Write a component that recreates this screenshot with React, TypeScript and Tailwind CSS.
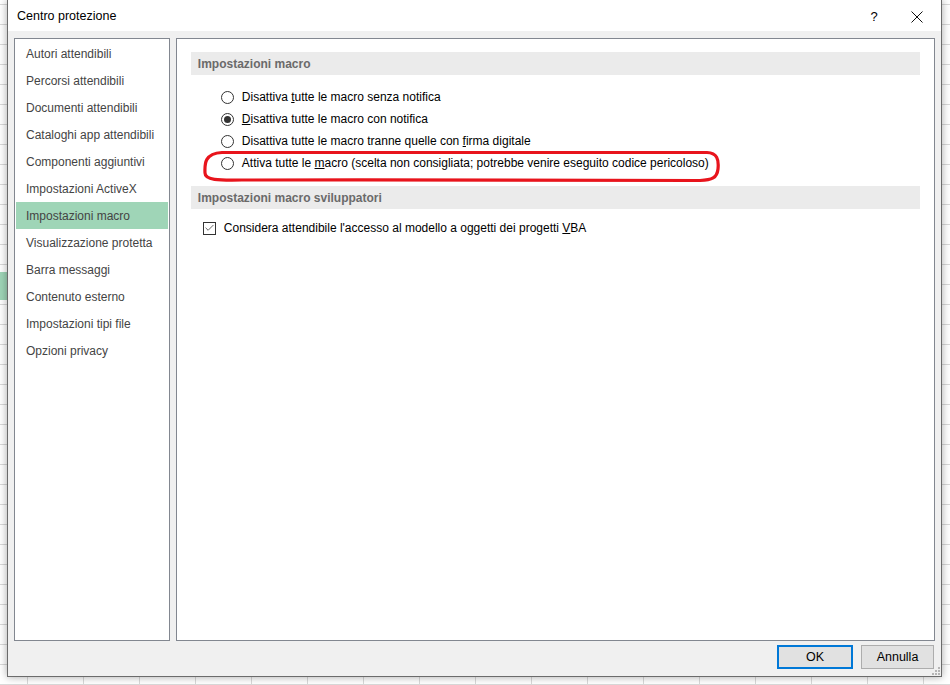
import { Check } from 'lucide-react';

const menu = [
  'Autori attendibili',
  'Percorsi attendibili',
  'Documenti attendibili',
  'Cataloghi app attendibili',
  'Componenti aggiuntivi',
  'Impostazioni ActiveX',
  'Impostazioni macro',
  'Visualizzazione protetta',
  'Barra messaggi',
  'Contenuto esterno',
  'Impostazioni tipi file',
  'Opzioni privacy',
];

function Radio({ checked }: { checked?: boolean }) {
  return (
    <span className="w-[13px] h-[13px] rounded-full border border-[#333] bg-white flex items-center justify-center shrink-0">
      {checked && <span className="w-[7px] h-[7px] rounded-full bg-[#333]" />}
    </span>
  );
}

function SectionHeader({ children }: { children: string }) {
  return (
    <div className="h-[23px] bg-[#ebebeb] flex items-center pl-[7px] text-[#6a6a6a] font-semibold">
      {children}
    </div>
  );
}

export default function App() {
  return (
    <div
      className="relative w-[950px] h-[685px] overflow-hidden bg-white bg-[linear-gradient(#d9d9d9_1px,transparent_1px),linear-gradient(90deg,#d9d9d9_1px,transparent_1px)] bg-size-[56px_20px] bg-position-[27px_4px] text-[12px] text-black"
      style={{ fontFamily: '"Segoe UI", "Liberation Sans", Arial, sans-serif' }}
    >
      <div className="absolute left-0 top-[272px] w-[7px] h-[28px] bg-[#9fd5b7]" />

      {/* dialog */}
      <div className="relative ml-[7px] w-[935px] h-[677px] bg-[#f0f0f0] border border-t-0 border-[#6b6b6b] shadow-[0_0_8px_rgba(0,0,0,0.35)] flex flex-col">
        <div className="h-[31px] bg-white flex items-center pl-[9px] pr-[14px] pt-[2px] text-[12.5px]">
          <span className="flex-1">Centro protezione</span>
          <span className="w-[20px] text-center text-[13px] mr-[27px]">?</span>
          <svg width="12" height="12" viewBox="0 0 12 12" className="mr-[4px]">
            <path d="M0.5 0.5 L11.5 11.5 M11.5 0.5 L0.5 11.5" stroke="#111" strokeWidth="1" />
          </svg>
        </div>

        <div className="flex gap-[6px] px-[6px] pt-[7px]">
          <div className="w-[156px] h-[603px] bg-white border border-[#828790] pt-[1px] px-[1px] text-[#444]">
            {menu.map((m) => (
              <div
                key={m}
                className={`h-[27px] flex items-center pl-[10px] ${m === 'Impostazioni macro' ? 'bg-[#9fd5b7]' : ''}`}
              >
                {m}
              </div>
            ))}
          </div>

          <div className="relative w-[760px] h-[603px] bg-white border border-[#828790] pt-[13px] px-[14px]">
            <SectionHeader>Impostazioni macro</SectionHeader>
            <div className="mt-[11px] pl-[30px] flex flex-col">
              <div className="h-[22px] flex items-center gap-[8px]">
                <Radio />
                <span>Disattiva <u>t</u>utte le macro senza notifica</span>
              </div>
              <div className="h-[22px] flex items-center gap-[8px]">
                <Radio checked />
                <span><u>D</u>isattiva tutte le macro con notifica</span>
              </div>
              <div className="h-[22px] flex items-center gap-[8px]">
                <Radio />
                <span>Disattiva tutte le macro tranne quelle con <u>f</u>irma digitale</span>
              </div>
              <div className="h-[22px] flex items-center gap-[8px]">
                <Radio />
                <span>Attiva tutte le <u>m</u>acro (scelta non consigliata; potrebbe venire eseguito codice pericoloso)</span>
              </div>
            </div>

            <div className="mt-[12px]">
              <SectionHeader>Impostazioni macro sviluppatori</SectionHeader>
            </div>
            <div className="mt-[8px] pl-[12px] h-[22px] flex items-center gap-[8px]">
              <span className="w-[13px] h-[13px] border border-[#333] bg-white flex items-center justify-center">
                <Check size={12} strokeWidth={1.5} color="#222" />
              </span>
              <span>Considera attendibile l'accesso al modello a oggetti dei progetti <u>V</u>BA</span>
            </div>

            {/* red highlight drawn over the 4th option */}
            <svg
              className="absolute left-[25px] top-[110px] pointer-events-none"
              width="520"
              height="36"
              viewBox="0 0 520 36"
            >
              <path
                d="M20 3.5 C120 2 300 3 505 3.5 C515 4 517 10 516 20 C515 29 510 31 498 31.5 C380 32 200 30.5 40 31 C16 31.5 3 31 3 24 C2.5 14 3 4.5 20 3.5 Z"
                fill="none"
                stroke="#e8141c"
                strokeWidth="3.2"
              />
            </svg>
          </div>
        </div>

        <div className="flex justify-end gap-[8px] pr-[7px] mt-[4px]">
          <button className="w-[76px] h-[24px] bg-[#e1e1e1] border-2 border-[#0078d7] text-[12.5px]">OK</button>
          <button className="w-[73px] h-[24px] bg-[#e1e1e1] border border-[#adadad] text-[12.5px]">Annulla</button>
        </div>

        <svg className="absolute right-[1px] bottom-[1px]" width="8" height="8" viewBox="0 0 8 8">
          <rect x="6" y="0" width="2" height="2" fill="#b5b5b5" />
          <rect x="3" y="3" width="2" height="2" fill="#b5b5b5" />
          <rect x="6" y="3" width="2" height="2" fill="#b5b5b5" />
          <rect x="0" y="6" width="2" height="2" fill="#b5b5b5" />
          <rect x="3" y="6" width="2" height="2" fill="#b5b5b5" />
          <rect x="6" y="6" width="2" height="2" fill="#b5b5b5" />
        </svg>
      </div>
    </div>
  );
}
